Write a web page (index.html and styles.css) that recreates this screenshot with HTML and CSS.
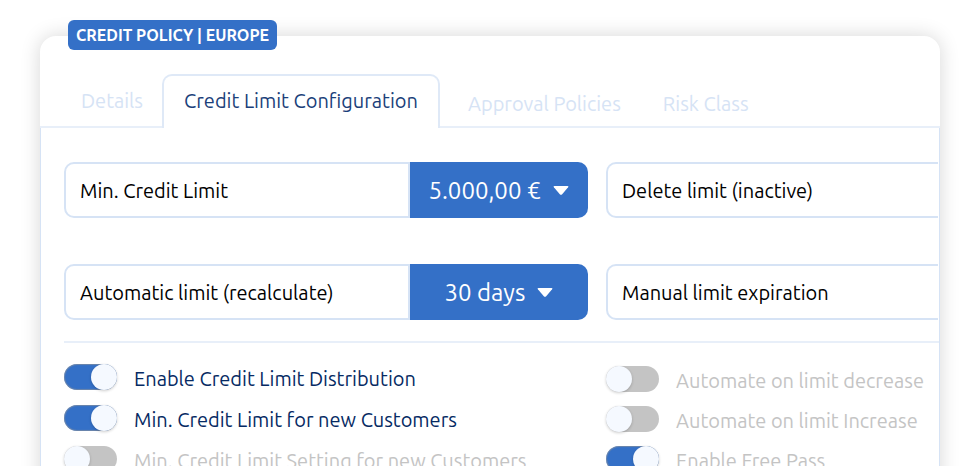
FILE: index.html
```html
<!DOCTYPE html>
<html lang="en">
<head>
<meta charset="utf-8">
<title>Credit Policy</title>
<link rel="stylesheet" href="styles.css">
</head>
<body>
<main class="card">
  <h1 class="badge">CREDIT POLICY | EUROPE</h1>
  <div class="tabs" role="tablist">
    <button class="tab tab-first" role="tab" type="button">Details</button>
    <button class="tab tab-active" role="tab" type="button" aria-selected="true">Credit Limit Configuration</button>
    <div class="tabs-rest">
      <button class="tab" role="tab" type="button">Approval Policies</button>
      <button class="tab" role="tab" type="button">Risk Class</button>
    </div>
  </div>
  <section class="panel">
    <div class="fields">
      <div class="field">
        <label class="field-label" for="min-limit">Min. Credit Limit</label>
        <div class="value">
          <select id="min-limit"><option>5.000,00 €</option></select>
          <svg class="caret" viewBox="0 0 16 9" aria-hidden="true"><path d="M1.500 0h13q1.500 .2.600 1.300L9.200 8.300q-1.200 1-2.400 0L.9 1.300Q0 .2 1.500 0z"/></svg>
        </div>
      </div>
      <div class="field field-cut"><span class="field-label">Delete limit (inactive)</span></div>
      <div class="field">
        <label class="field-label" for="auto-limit">Automatic limit (recalculate)</label>
        <div class="value">
          <select id="auto-limit"><option>30 days</option></select>
          <svg class="caret" viewBox="0 0 16 9" aria-hidden="true"><path d="M1.500 0h13q1.500 .2.600 1.300L9.200 8.300q-1.200 1-2.400 0L.9 1.300Q0 .2 1.500 0z"/></svg>
        </div>
      </div>
      <div class="field field-cut"><span class="field-label">Manual limit expiration</span></div>
    </div>
    <div class="options">
      <div class="option-list">
        <label class="option option-on"><input class="switch" type="checkbox" checked>Enable Credit Limit Distribution</label>
        <label class="option option-on"><input class="switch" type="checkbox" checked>Min. Credit Limit for new Customers</label>
        <label class="option"><input class="switch" type="checkbox">Min. Credit Limit Setting for new Customers</label>
      </div>
      <div class="option-list option-list-right">
        <label class="option"><input class="switch" type="checkbox">Automate on limit decrease</label>
        <label class="option"><input class="switch" type="checkbox">Automate on limit Increase</label>
        <label class="option"><input class="switch" type="checkbox" checked>Enable Free Pass</label>
      </div>
    </div>
  </section>
</main>
</body>
</html>
```

FILE: styles.css
```css
* { box-sizing: border-box; }

body {
  margin: 0;
  height: 100vh;
  overflow: hidden;
  padding: 36px 40px 0;
  background: #fff;
  color: #000;
  font-family: Ubuntu, "Noto Sans", sans-serif;
  font-size: 20px;
  line-height: 26px;
}

button, select { font: inherit; }

.card {
  position: relative;
  min-height: 100%;
  padding-top: 38px;
  border-radius: 16px;
  background: #fff;
  box-shadow: 0 0 20px rgba(0, 0, 0, 0.16);
}

.badge {
  position: absolute;
  top: -16px;
  left: 28px;
  margin: 0;
  padding: 0 8px;
  border-radius: 6px;
  background: #3470c7;
  color: #fff;
  font-size: 16px;
  font-weight: 700;
  line-height: 30px;
  white-space: nowrap;
}

.tabs {
  display: flex;
  height: 54px;
}

.tab {
  padding: 0;
  border: 0;
  background: none;
  color: #d6e3f5;
  white-space: nowrap;
}

.tab-first {
  padding: 2px 19px 0 41px;
  border-bottom: 2px solid #e8eff9;
}

.tab-active {
  padding: 0 20px 2px;
  border: solid #dfe9f7;
  border-width: 2px 2px 0;
  border-radius: 10px 10px 0 0;
  color: #1b3f7a;
}

.tabs-rest {
  display: flex;
  flex: 1;
  gap: 42px;
  padding: 7px 0 0 28px;
  border-bottom: 2px solid #e8eff9;
}

.panel {
  padding: 34px 0 40px 23px;
  border: solid #d6e3f5;
  border-width: 0 1px;
}

.fields {
  display: grid;
  grid-template-columns: minmax(0, 524fr) minmax(0, 332fr);
  gap: 46px 18px;
  padding: 0 1px 21px 0;
}

.field {
  display: flex;
  height: 56px;
  border-radius: 10px;
}

.field-label {
  display: flex;
  flex: 1;
  align-items: center;
  padding: 2px 14px 0;
  border: 2px solid #d6e3f5;
  border-radius: 10px 0 0 10px;
  white-space: nowrap;
}

.field-cut .field-label { border-right: 0; }

.value {
  display: flex;
  align-items: center;
  justify-content: center;
  gap: 12px;
  width: 34%;
  border-radius: 0 10px 10px 0;
  background: #3470c7;
  color: #fff;
}

.value select {
  appearance: none;
  padding: 2px 0 0;
  border: 0;
  background: none;
  color: inherit;
  font-size: 24px;
}

.caret {
  width: 16px;
  height: 9px;
  fill: #fff;
}

.options {
  display: grid;
  grid-template-columns: minmax(0, 524fr) minmax(0, 333fr);
  gap: 18px;
  padding-top: 21px;
  border-top: 2px solid #e8eff9;
}

.option-list {
  display: flex;
  flex-direction: column;
  gap: 15px;
}

.option-list-right {
  gap: 14px;
  padding-top: 2px;
}

.option {
  display: flex;
  align-items: center;
  gap: 17px;
  height: 26px;
  padding-top: 4px;
  color: #c4c4c4;
  white-space: nowrap;
}

.option-on { color: #062a63; }

.switch {
  appearance: none;
  flex: none;
  width: 53px;
  height: 26px;
  margin: 0 0 4px;
  border-radius: 13px;
  background: #c4c4c4;
}

.switch::before {
  content: "";
  display: block;
  width: 26px;
  height: 26px;
  border-radius: 50%;
  background: #f5f9ff;
  box-shadow: 0 1px 3px rgba(0, 0, 0, 0.2);
}

.switch:checked {
  background: #3470c7;
  box-shadow: inset 0 0 1px 1px rgba(150, 150, 150, 0.6);
}

.switch:checked::before { margin-left: auto; }
```
